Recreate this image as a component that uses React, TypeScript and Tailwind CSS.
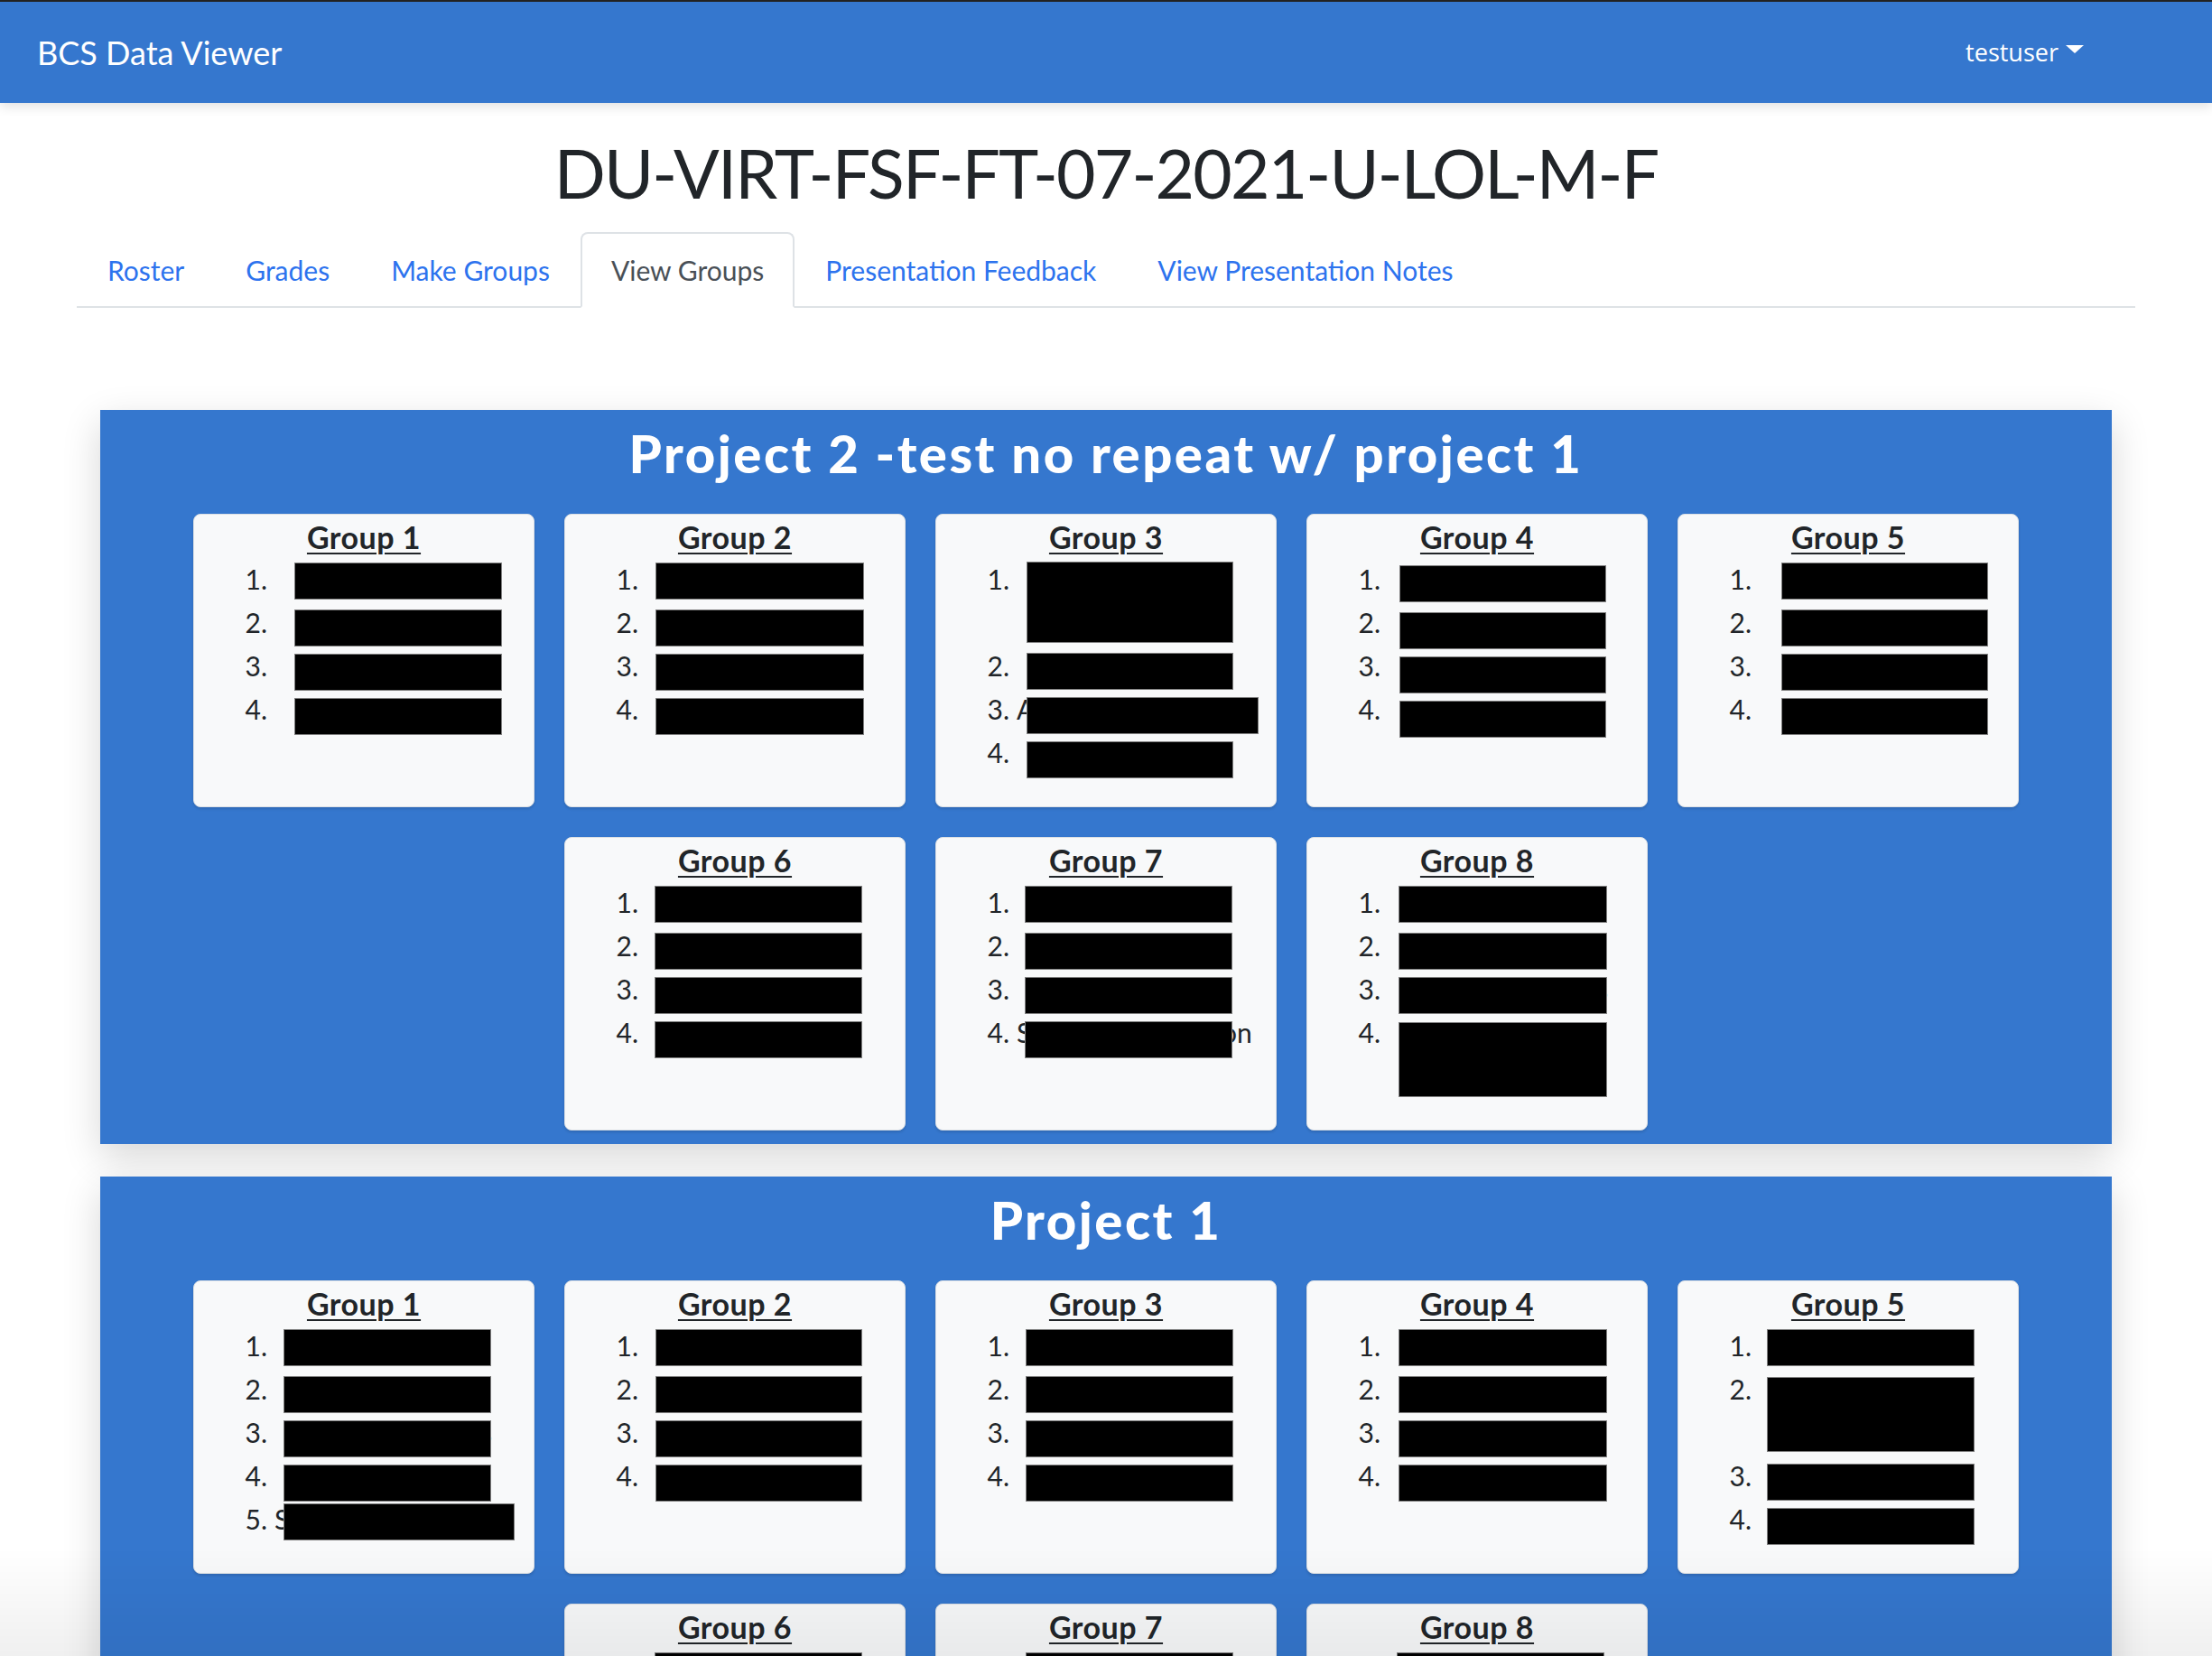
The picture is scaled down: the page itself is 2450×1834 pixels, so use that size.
import React from "react";

type Item = {
  w?: number;
  h?: number;
  y?: number;
  lines?: number;
  pre?: string;
  post?: string;
};

type Group = { title: string; x: number; items: Item[] };

type Project = { title: string; groups: Group[] };

const four = (w: number): Item[] => [{ w }, { w }, { w }, { w }];

// default vertical offset of a redaction box inside its line
const yOff = [6, 10, 11, 12, 12];

const projects: Project[] = [
  {
    title: "Project 2 -test no repeat w/ project 1",
    groups: [
      { title: "Group 1", x: 112, items: four(230) },
      { title: "Group 2", x: 101, items: four(231) },
      {
        title: "Group 3",
        x: 101,
        items: [{ w: 229, lines: 2, h: 90, y: 5 }, { w: 229 }, { w: 257, pre: "A" }, { w: 229 }],
      },
      { title: "Group 4", x: 103, items: four(229) },
      { title: "Group 5", x: 115, items: four(229) },
      { title: "Group 6", x: 100, items: four(230) },
      {
        title: "Group 7",
        x: 99,
        items: [{ w: 230 }, { w: 230 }, { w: 230 }, { w: 230, pre: "S", post: "on" }],
      },
      {
        title: "Group 8",
        x: 102,
        items: [{ w: 231 }, { w: 231 }, { w: 231, post: "s" }, { w: 231, lines: 2, h: 83, y: 13 }],
      },
    ],
  },
  {
    title: "Project 1",
    groups: [
      {
        title: "Group 1",
        x: 100,
        items: [{ w: 230 }, { w: 230 }, { w: 230, post: "s" }, { w: 230 }, { w: 256, pre: "S", y: 7 }],
      },
      { title: "Group 2", x: 101, items: four(229) },
      { title: "Group 3", x: 100, items: four(230) },
      { title: "Group 4", x: 102, items: four(231) },
      {
        title: "Group 5",
        x: 99,
        items: [{ w: 230 }, { w: 230, lines: 2, h: 83, y: 11 }, { w: 230 }, { w: 230 }],
      },
      { title: "Group 6", x: 100, items: four(230) },
      { title: "Group 7", x: 100, items: four(230) },
      { title: "Group 8", x: 100, items: four(230) },
    ],
  },
];

const tabs = ["Roster", "Grades", "Make Groups", "View Groups", "Presentation Feedback", "View Presentation Notes"];

function GroupCard({ g }: { g: Group }) {
  return (
    <div className="w-[378px] rounded-[8px] border border-[#dde1e5] bg-[#f8f9fa] pt-[6px] pb-[36px] shadow-[0_2px_3px_rgba(0,0,0,0.12)]">
      <h5 className="text-center text-[34px] font-bold leading-[38px] tracking-[0.5px] text-[#212529] underline decoration-2 underline-offset-[4px]">
        {g.title}
      </h5>
      <ol className="mt-[3px]">
        {g.items.map((it, i) => {
          const w = it.w ?? 230;
          const two = (it.lines ?? 1) === 2;
          return (
            <li
              key={i}
              className={`relative flex text-[30px] leading-[48px] text-[#212529] ${two ? "h-[96px]" : "h-[48px]"}`}
            >
              <span className="w-[81px] shrink-0 text-right">{i + 1}.</span>
              {it.pre && <span className="ml-[8px]">{it.pre}</span>}
              {it.post && (
                <span className="absolute top-0" style={{ left: g.x - 1 + w - 12 }}>
                  {it.post}
                </span>
              )}
              <span
                className="absolute border border-[#7f7f7f] bg-black"
                style={{ left: g.x - 1, top: it.y ?? (g.x === 103 ? yOff[i] + 3 : yOff[i]), width: w, height: it.h ?? 41 }}
              />
            </li>
          );
        })}
      </ol>
    </div>
  );
}

function ProjectPanel({ p, first }: { p: Project; first?: boolean }) {
  return (
    <section
      className={`mx-[26px] bg-[#3577ce] pt-[14px] pb-[15px] shadow-[0_14px_40px_rgba(0,0,0,0.16)] ${first ? "mt-[113px]" : "mt-[36px]"}`}
    >
      <h2 className="text-center text-[58px] font-black leading-[67px] tracking-[2.5px] text-white">{p.title}</h2>
      <div className="mt-[34px] flex flex-wrap justify-center gap-[33px]">
        {p.groups.map((g) => (
          <GroupCard key={g.title} g={g} />
        ))}
      </div>
    </section>
  );
}

export default function App() {
  return (
    <div className="min-h-screen bg-white pb-[80px] font-[Lato,sans-serif]">
      <nav className="relative z-10 flex h-[114px] items-center justify-between border-t-2 border-[#222] bg-[#3577ce] pr-[142px] pl-[41px] shadow-[0_4px_12px_rgba(0,0,0,0.12)]">
        <span className="text-[36px] leading-[48px] text-white">BCS Data Viewer</span>
        <span className="flex items-center font-['Open_Sans',sans-serif] text-[27px] text-white">
          testuser
          <span className="mb-[8px] ml-[8px] h-0 w-0 border-x-[10px] border-t-[9px] border-x-transparent border-t-white" />
        </span>
      </nav>

      <div className="mx-auto w-[2280px]">
        <h1 className="mt-[29px] text-center text-[75px] leading-[96px] tracking-[-1.8px] text-[#212529]">
          DU-VIRT-FSF-FT-07-2021-U-LOL-M-F
        </h1>

        <ul className="mt-[18px] flex border-b-2 border-[#dee2e6]">
          {tabs.map((t) => {
            const active = t === "View Groups";
            return (
              <li key={t} className="-mb-[2px]">
                <a
                  className={`block rounded-t-[8px] border-2 px-[32px] py-[16px] text-[30px] leading-[48px] ${
                    active
                      ? "border-[#dee2e6] border-b-white bg-white text-[#495057]"
                      : "border-transparent text-[#2d73ee]"
                  }`}
                >
                  {t}
                </a>
              </li>
            );
          })}
        </ul>

        {projects.map((p, i) => (
          <ProjectPanel key={p.title} p={p} first={i === 0} />
        ))}
      </div>

      <div className="pointer-events-none fixed inset-x-0 bottom-0 z-20 h-[120px] bg-linear-to-b from-transparent to-black/[0.06]" />
    </div>
  );
}
